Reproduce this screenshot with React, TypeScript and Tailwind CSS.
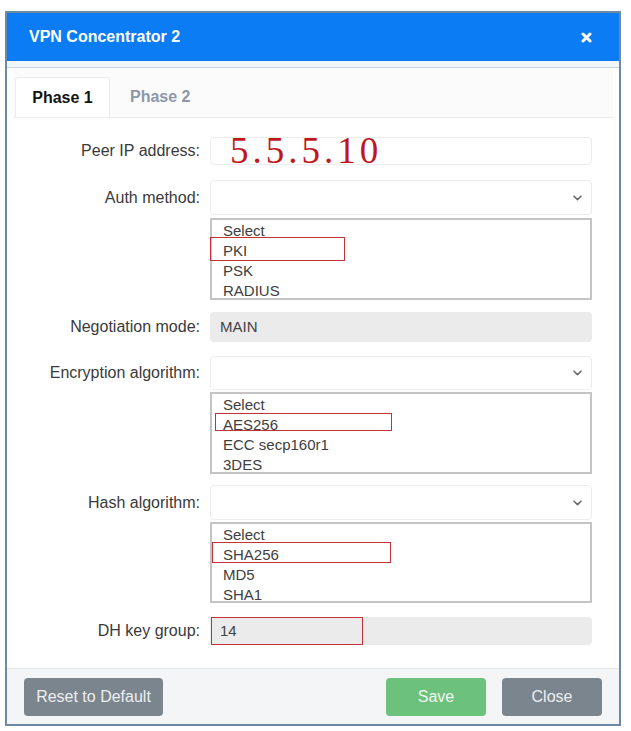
import React from 'react';

interface ListOption {
  label: string;
  // red annotation box drawn over the option: [left, top, width, height] inside the list
  mark?: [number, number, number, number];
}

const Chevron = () => (
  <svg width="9" height="6" viewBox="0 0 9 6" className="absolute right-[9px] top-1/2 -translate-y-1/2">
    <path d="M1 1.2 L4.5 4.6 L8 1.2" fill="none" stroke="#6b6b6b" strokeWidth="1.6" strokeLinecap="round" strokeLinejoin="round" />
  </svg>
);

const Label = ({ text }: { text: string }) => (
  <div className="w-[193px] shrink-0 text-right text-[16px] text-[#3a3a3a]">{text}</div>
);

const SelectBox = ({ height }: { height: string }) => (
  <div className={`relative w-[382px] ${height} rounded-[4px] border border-[#ececec] bg-white`}>
    <Chevron />
  </div>
);

const ListBox = ({ options, height, mt }: { options: ListOption[]; height: string; mt: string }) => (
  <div className={`ml-[203px] ${mt} w-[382px] ${height} relative border-2 border-[#c4c4c4] bg-white pl-[11px] pt-[1px]`}>
    {options.map((opt) => (
      <div key={opt.label} className="h-[20px] text-[15px] leading-[20px] text-[#404040]">
        {opt.label}
      </div>
    ))}
    {options
      .filter((o) => o.mark)
      .map((o) => {
        const [l, t, w, h] = o.mark!;
        return (
          <span
            key={o.label + '-mark'}
            className="absolute border-[1.5px] border-[#c4313a]"
            style={{ left: l, top: t, width: w, height: h }}
          />
        );
      })}
  </div>
);

export default function App() {
  return (
    <div
      className="h-[731px] w-[631px] bg-white pl-[5px] pt-[11px]"
      style={{ fontFamily: '"Liberation Sans", Arial, sans-serif' }}
    >
      <div className="flex h-[715px] w-[616px] flex-col border-2 border-[#6c88a4] bg-white">
        {/* Header */}
        <div className="flex h-[48px] shrink-0 items-center justify-between bg-[#0b7cf4] pl-[22px] pr-[27px]">
          <span className="text-[16px] font-bold text-white">VPN Concentrator 2</span>
          <svg width="11" height="11" viewBox="0 0 11 11">
            <path d="M2 2 L9 9 M9 2 L2 9" stroke="#ffffff" strokeWidth="3" strokeLinecap="round" />
          </svg>
        </div>
        <div className="h-[6px] shrink-0 bg-[#f1f6fb]" />
        <div className="h-[1px] shrink-0 bg-[#c6d4e2]" />

        {/* Tabs */}
        <div className="mx-[6px] flex shrink-0 items-end border-b border-[#ececec] bg-[#fbfbfb] pl-[2px] pt-[9px]">
          <div className="flex h-[40px] w-[95px] items-center justify-center rounded-t-[3px] border border-b-0 border-[#ececec] bg-white text-[16px] font-bold text-[#141414]">
            Phase 1
          </div>
          <div className="flex h-[40px] items-center pl-[20px] text-[16px] font-bold text-[#8d97a8]">Phase 2</div>
        </div>

        {/* Form */}
        <div className="flex flex-col">
          <div className="mt-[19px] flex items-center gap-[10px]">
            <Label text="Peer IP address:" />
            <div className="relative h-[28px] w-[382px] rounded-[4px] border border-[#ececec] bg-white">
              <span
                className="absolute left-[19px] top-[-8px] text-[37px] leading-[42px] tracking-[4px] text-[#c0161d]"
                style={{ fontFamily: '"Liberation Serif", "Times New Roman", serif' }}
              >
                5.5.5.10
              </span>
            </div>
          </div>

          <div className="mt-[15px] flex items-center gap-[10px]">
            <Label text="Auth method:" />
            <SelectBox height="h-[35px]" />
          </div>
          <ListBox
            mt="mt-[3px]"
            height="h-[82px]"
            options={[
              { label: 'Select' },
              { label: 'PKI', mark: [-2, 17, 135, 24] },
              { label: 'PSK' },
              { label: 'RADIUS' },
            ]}
          />

          <div className="mt-[12px] flex items-center gap-[10px]">
            <Label text="Negotiation mode:" />
            <div className="flex h-[30px] w-[382px] items-center rounded-[4px] bg-[#ebebeb] pl-[10px] text-[15px] text-[#444]">
              MAIN
            </div>
          </div>

          <div className="mt-[14px] flex items-center gap-[10px]">
            <Label text="Encryption algorithm:" />
            <SelectBox height="h-[34px]" />
          </div>
          <ListBox
            mt="mt-[2px]"
            height="h-[82px]"
            options={[
              { label: 'Select' },
              { label: 'AES256', mark: [3, 19, 177, 18] },
              { label: 'ECC secp160r1' },
              { label: '3DES' },
            ]}
          />

          <div className="mt-[11px] flex items-center gap-[10px]">
            <Label text="Hash algorithm:" />
            <SelectBox height="h-[35px]" />
          </div>
          <ListBox
            mt="mt-[2px]"
            height="h-[81px]"
            options={[
              { label: 'Select' },
              { label: 'SHA256', mark: [0, 18, 179, 21] },
              { label: 'MD5' },
              { label: 'SHA1' },
            ]}
          />

          <div className="mt-[14px] flex items-center gap-[10px]">
            <Label text="DH key group:" />
            <div className="relative flex h-[28px] w-[382px] items-center rounded-[4px] bg-[#ebebeb] pl-[10px] text-[15px] text-[#444]">
              14
              <span className="absolute left-[1px] top-0 h-[28px] w-[152px] border-[1.5px] border-[#c4313a]" />
            </div>
          </div>
        </div>

        {/* Footer */}
        <div className="mt-auto flex h-[56px] shrink-0 items-start border-t border-[#e6e6e6] bg-[#f4f5f6] px-[17px] pt-[9px]">
          <button className="h-[38px] w-[139px] rounded-[4px] bg-[#7b858e] text-[16px] text-[#eceef0]">
            Reset to Default
          </button>
          <div className="ml-auto flex gap-[16px]">
            <button className="h-[38px] w-[100px] rounded-[4px] bg-[#6cc27d] text-[16px] text-[#f0f8f1]">Save</button>
            <button className="h-[38px] w-[100px] rounded-[4px] bg-[#7b858e] text-[16px] text-[#eceef0]">Close</button>
          </div>
        </div>
      </div>
    </div>
  );
}
